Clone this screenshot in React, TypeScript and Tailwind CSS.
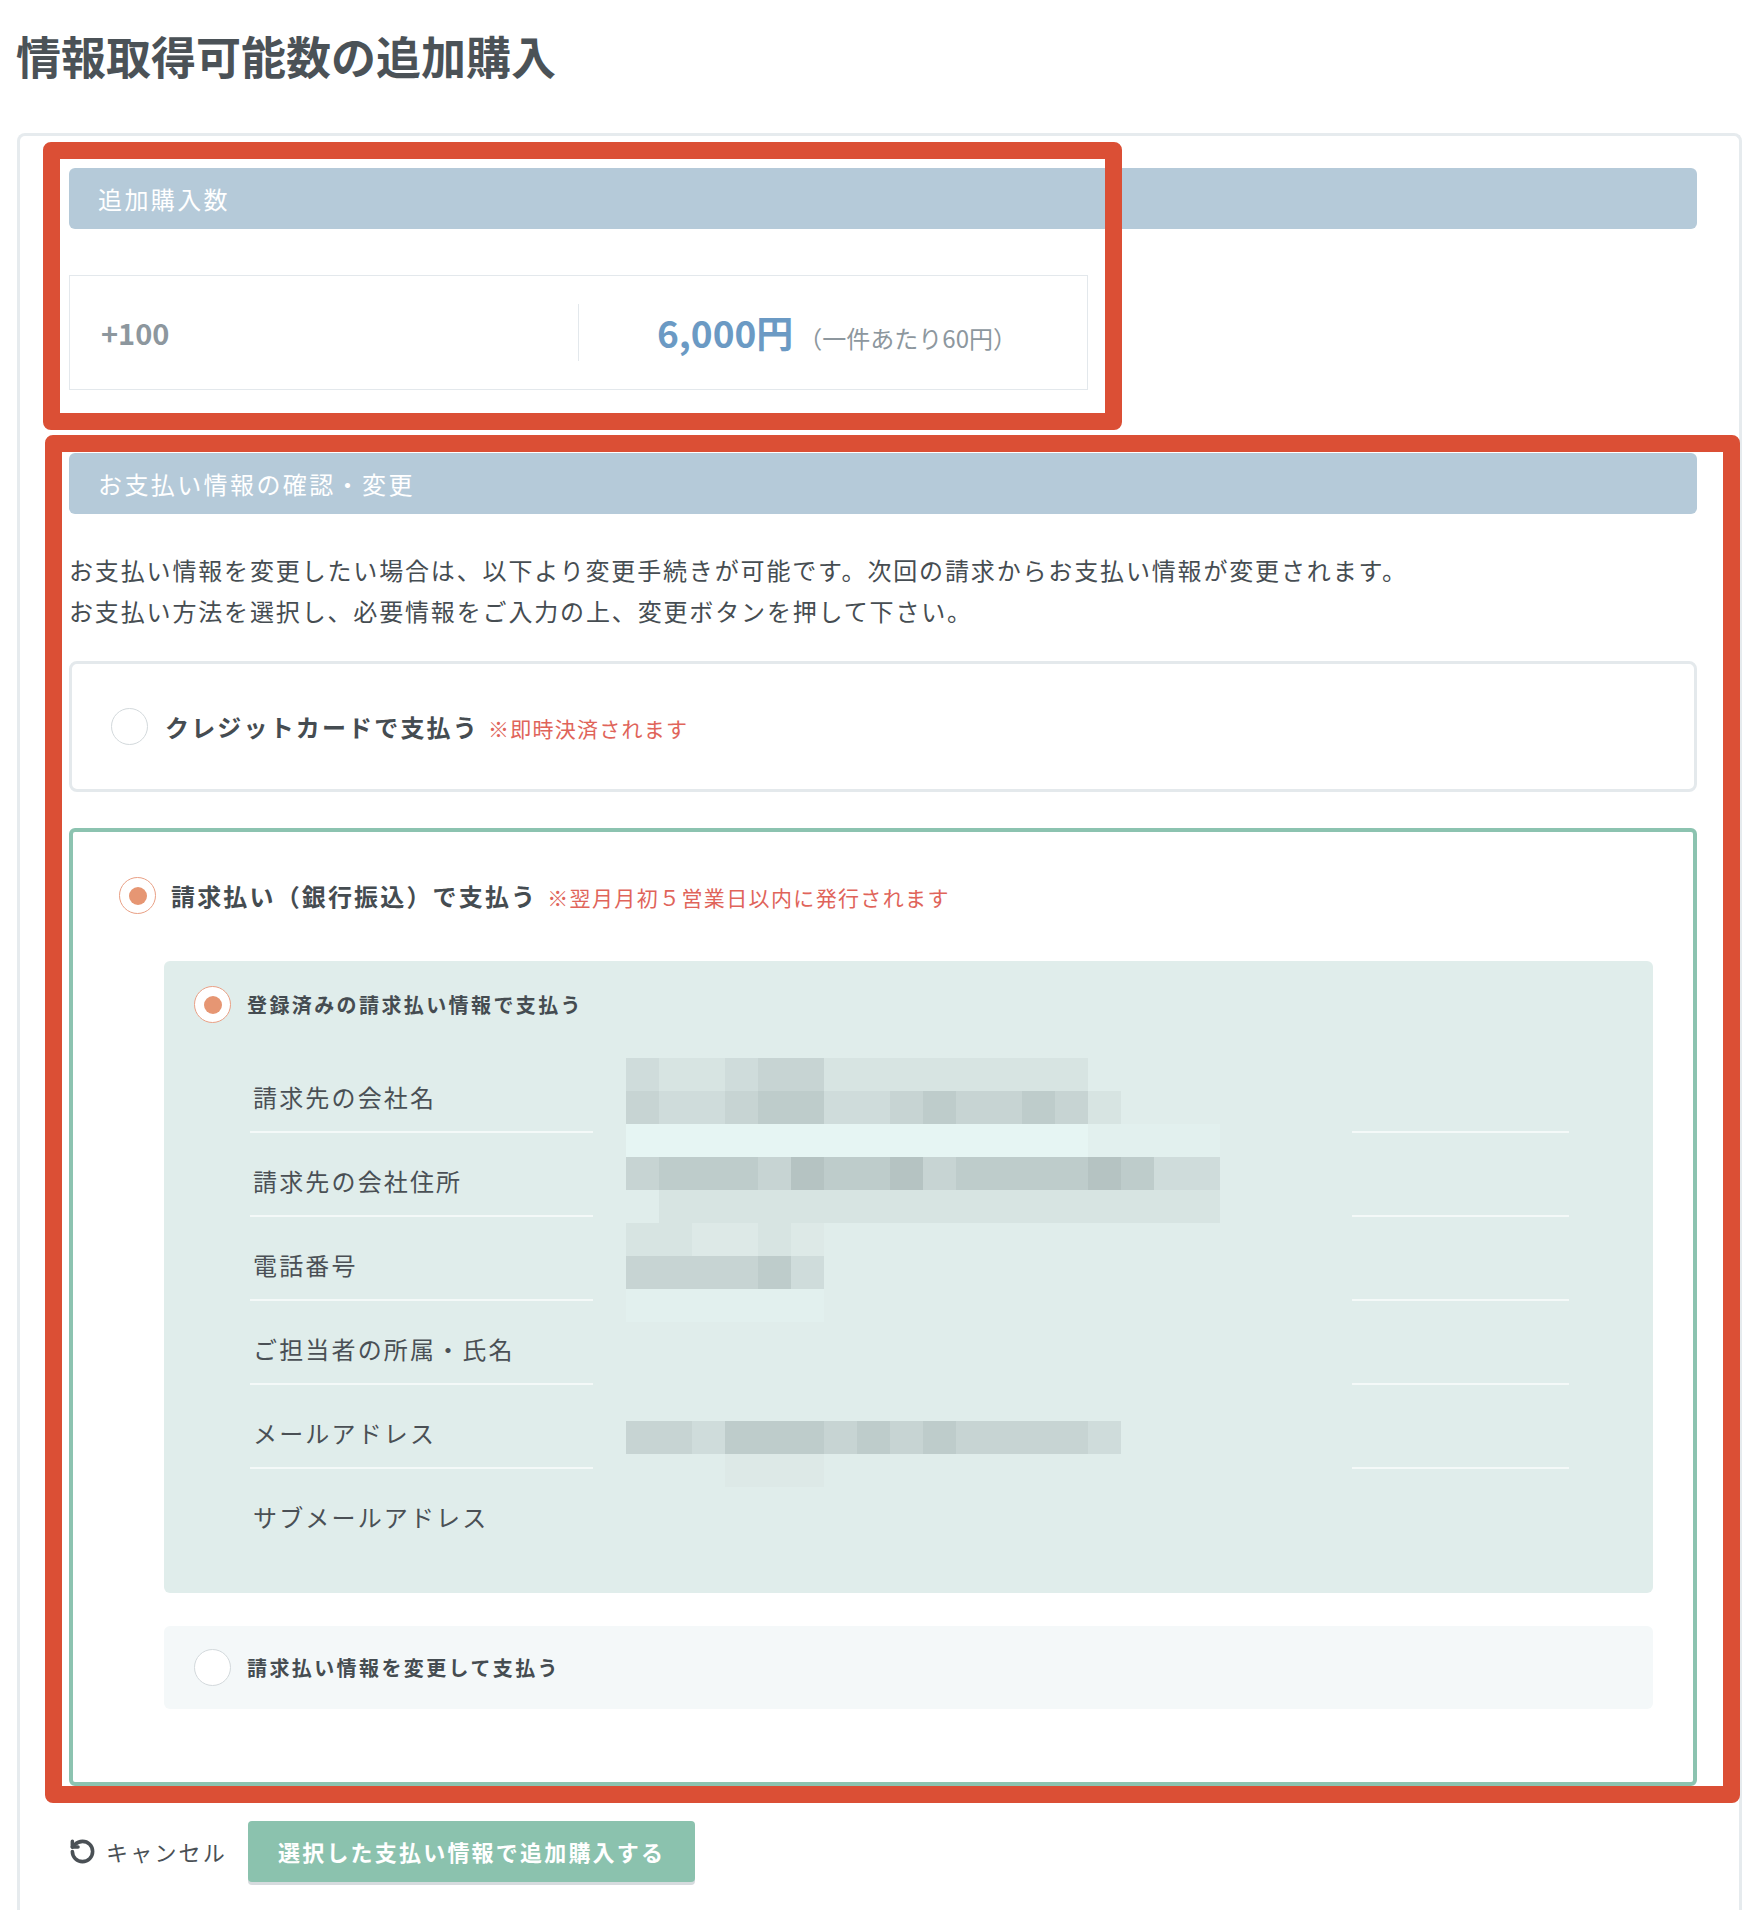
import { RotateCcw } from "lucide-react";

const MOSAIC = [
  "02112331111111100000000",
  "03223442234334310000000",
  "0LLLLLLLLLLLLLLllll0000",
  "03444354453444454220000",
  "00111111111111111110000",
  "011dd1d0000000000000000",
  "03333420000000000000000",
  "0llllll0000000000000000",
  "00000000000000000000000",
  "00000000000000000000000",
  "00000000000000000000000",
  "03324443434333320000000",
  "0000ddd0000000000000000",
];

const SHADE: Record<string, string> = {
  "0": "",
  "1": "bg-[#d7e4e2]",
  "2": "bg-[#cfdcdb]",
  "3": "bg-[#c7d4d3]",
  "4": "bg-[#becccb]",
  "5": "bg-[#b5c3c2]",
  L: "bg-[#e6f5f3]",
  l: "bg-[#e2f0ee]",
  d: "bg-[#dde9e7]",
};

const ROWS = [
  "請求先の会社名",
  "請求先の会社住所",
  "電話番号",
  "ご担当者の所属・氏名",
  "メールアドレス",
  "サブメールアドレス",
];

function Radio({ checked }: { checked?: boolean }) {
  if (checked) {
    return (
      <span className="flex h-[37px] w-[37px] shrink-0 items-center justify-center rounded-full border-[1.5px] border-[#e9a085] bg-white">
        <span className="h-[18px] w-[18px] rounded-full bg-[#e69673]" />
      </span>
    );
  }
  return <span className="h-[37px] w-[37px] shrink-0 rounded-full border border-[#d3d9dc] bg-white" />;
}

function SectionHeader({ title }: { title: string }) {
  return (
    <div className="flex h-[61px] items-center rounded-[6px] bg-[#b5cad9] pl-[29px] text-[24px] tracking-[0.1em] text-white">
      {title}
    </div>
  );
}

export default function App() {
  return (
    <div className="relative min-h-[1910px] w-[1744px] bg-white font-['Noto_Sans_CJK_JP','Noto_Sans',sans-serif] text-[#474e53]">
      <h1 className="pl-[16px] pt-[24px] text-[45px] font-bold leading-[64px] text-[#4b5257]">情報取得可能数の追加購入</h1>

      <div className="ml-[17px] mt-[45px] w-[1725px] rounded-t-[8px] border-[3px] border-b-0 border-[#e6ebee] pb-[60px] pl-[49px] pt-[32px]">
        <div className="w-[1628px]">
          {/* 追加購入数 */}
          <SectionHeader title="追加購入数" />
          <div className="mt-[46px] flex h-[115px] w-[1019px] items-center border border-[#e3e8ec]">
            <div className="w-[508px] pl-[31px] text-[29px] font-bold text-[#8d979e]">+100</div>
            <div className="h-[57px] w-px bg-[#e3e8ec]" />
            <div className="flex flex-1 items-baseline justify-center pl-[8px]">
              <span className="text-[37px] font-bold leading-none text-[#6b9ac4]">6,000円</span>
              <span className="ml-[5px] text-[24px] leading-none text-[#8d979e]">（一件あたり60円）</span>
            </div>
          </div>

          {/* お支払い情報 */}
          <div className="mt-[63px]">
            <SectionHeader title="お支払い情報の確認・変更" />
          </div>
          <p className="mt-[35px] text-[24px] leading-[41px] tracking-[0.077em] text-[#464d52]">
            お支払い情報を変更したい場合は、以下より変更手続きが可能です。次回の請求からお支払い情報が変更されます。
            <br />
            お支払い方法を選択し、必要情報をご入力の上、変更ボタンを押して下さい。
          </p>

          <div className="mt-[30px] flex h-[131px] items-center rounded-[8px] border-[3px] border-[#e4e9ec] pl-[39px]">
            <Radio />
            <div className="ml-[17px] flex items-baseline">
              <span className="text-[24px] font-bold tracking-[0.09em] text-[#454c51]">クレジットカードで支払う</span>
              <span className="ml-[9px] text-[21px] tracking-[0.06em] text-[#e0645a]">※即時決済されます</span>
            </div>
          </div>

          <div className="mt-[36px] rounded-[6px] border-[4px] border-[#8cc3b0] pb-[73px] pt-[45px]">
            <div className="flex items-center pl-[46px]">
              <Radio checked />
              <div className="ml-[15px] flex items-baseline">
                <span className="text-[24px] font-bold tracking-[0.09em] text-[#454c51]">請求払い（銀行振込）で支払う</span>
                <span className="ml-[10px] text-[21px] tracking-[0.065em] text-[#e0645a]">※翌月月初５営業日以内に発行されます</span>
              </div>
            </div>

            <div className="relative ml-[91px] mr-[40px] mt-[47px] rounded-[6px] bg-[#e0edeb] pb-[40px] pl-[30px] pt-[25px]">
              <div className="flex items-center">
                <Radio checked />
                <span className="ml-[16px] text-[20px] font-bold tracking-[0.12em] text-[#454c51]">登録済みの請求払い情報で支払う</span>
              </div>
              <div className="ml-[56px] mt-[26px] w-[1319px]">
                {ROWS.map((label, i) => (
                  <div key={label} className="flex">
                    <div
                      className={
                        i < ROWS.length - 1
                          ? "h-[84px] w-[345px] border-b-2 border-[#f4f9f8] pl-[3px] pt-[30px] text-[24px] leading-[36px] tracking-[0.09em] text-[#4a5055]"
                          : "h-[84px] w-[345px] pl-[3px] pt-[30px] text-[24px] leading-[36px] tracking-[0.09em] text-[#4a5055]"
                      }
                    >
                      {label}
                    </div>
                    <div className={i < ROWS.length - 1 ? "h-[84px] flex-1 border-b-2 border-[#f4f9f8]" : "h-[84px] flex-1"} />
                  </div>
                ))}
              </div>
              {/* mosaic redaction */}
              <div className="absolute left-[429px] top-[97px] grid grid-cols-[repeat(23,33px)] grid-rows-[repeat(13,33px)] bg-[#e0edeb]">
                {MOSAIC.map((row, r) =>
                  row.split("").map((ch, c) => <div key={r + "-" + c} className={SHADE[ch]} />)
                )}
              </div>
            </div>

            <div className="ml-[91px] mr-[40px] mt-[33px] flex h-[83px] items-center rounded-[6px] bg-[#f4f8f9] pl-[30px]">
              <Radio />
              <span className="ml-[16px] text-[20px] font-bold tracking-[0.12em] text-[#454c51]">請求払い情報を変更して支払う</span>
            </div>
          </div>

          <div className="mt-[35px] flex items-center">
            <div className="flex items-center text-[#4a5055]">
              <RotateCcw size={27} strokeWidth={3.2} />
              <span className="ml-[10px] text-[22px] tracking-[0.1em]">キャンセル</span>
            </div>
            <button className="ml-[21px] h-[61px] rounded-[4px] bg-[#8bc2ae] px-[30px] text-[22px] font-bold tracking-[0.1em] text-white shadow-[0_3px_0_#d6dbde]">
              選択した支払い情報で追加購入する
            </button>
          </div>
        </div>
      </div>

      {/* annotation frames */}
      <div className="pointer-events-none absolute left-[43px] top-[142px] h-[288px] w-[1079px] rounded-[8px] border-[17px] border-[#db4f35]" />
      <div className="pointer-events-none absolute left-[45px] top-[435px] h-[1368px] w-[1695px] rounded-[8px] border-[17px] border-[#db4f35]" />
    </div>
  );
}
